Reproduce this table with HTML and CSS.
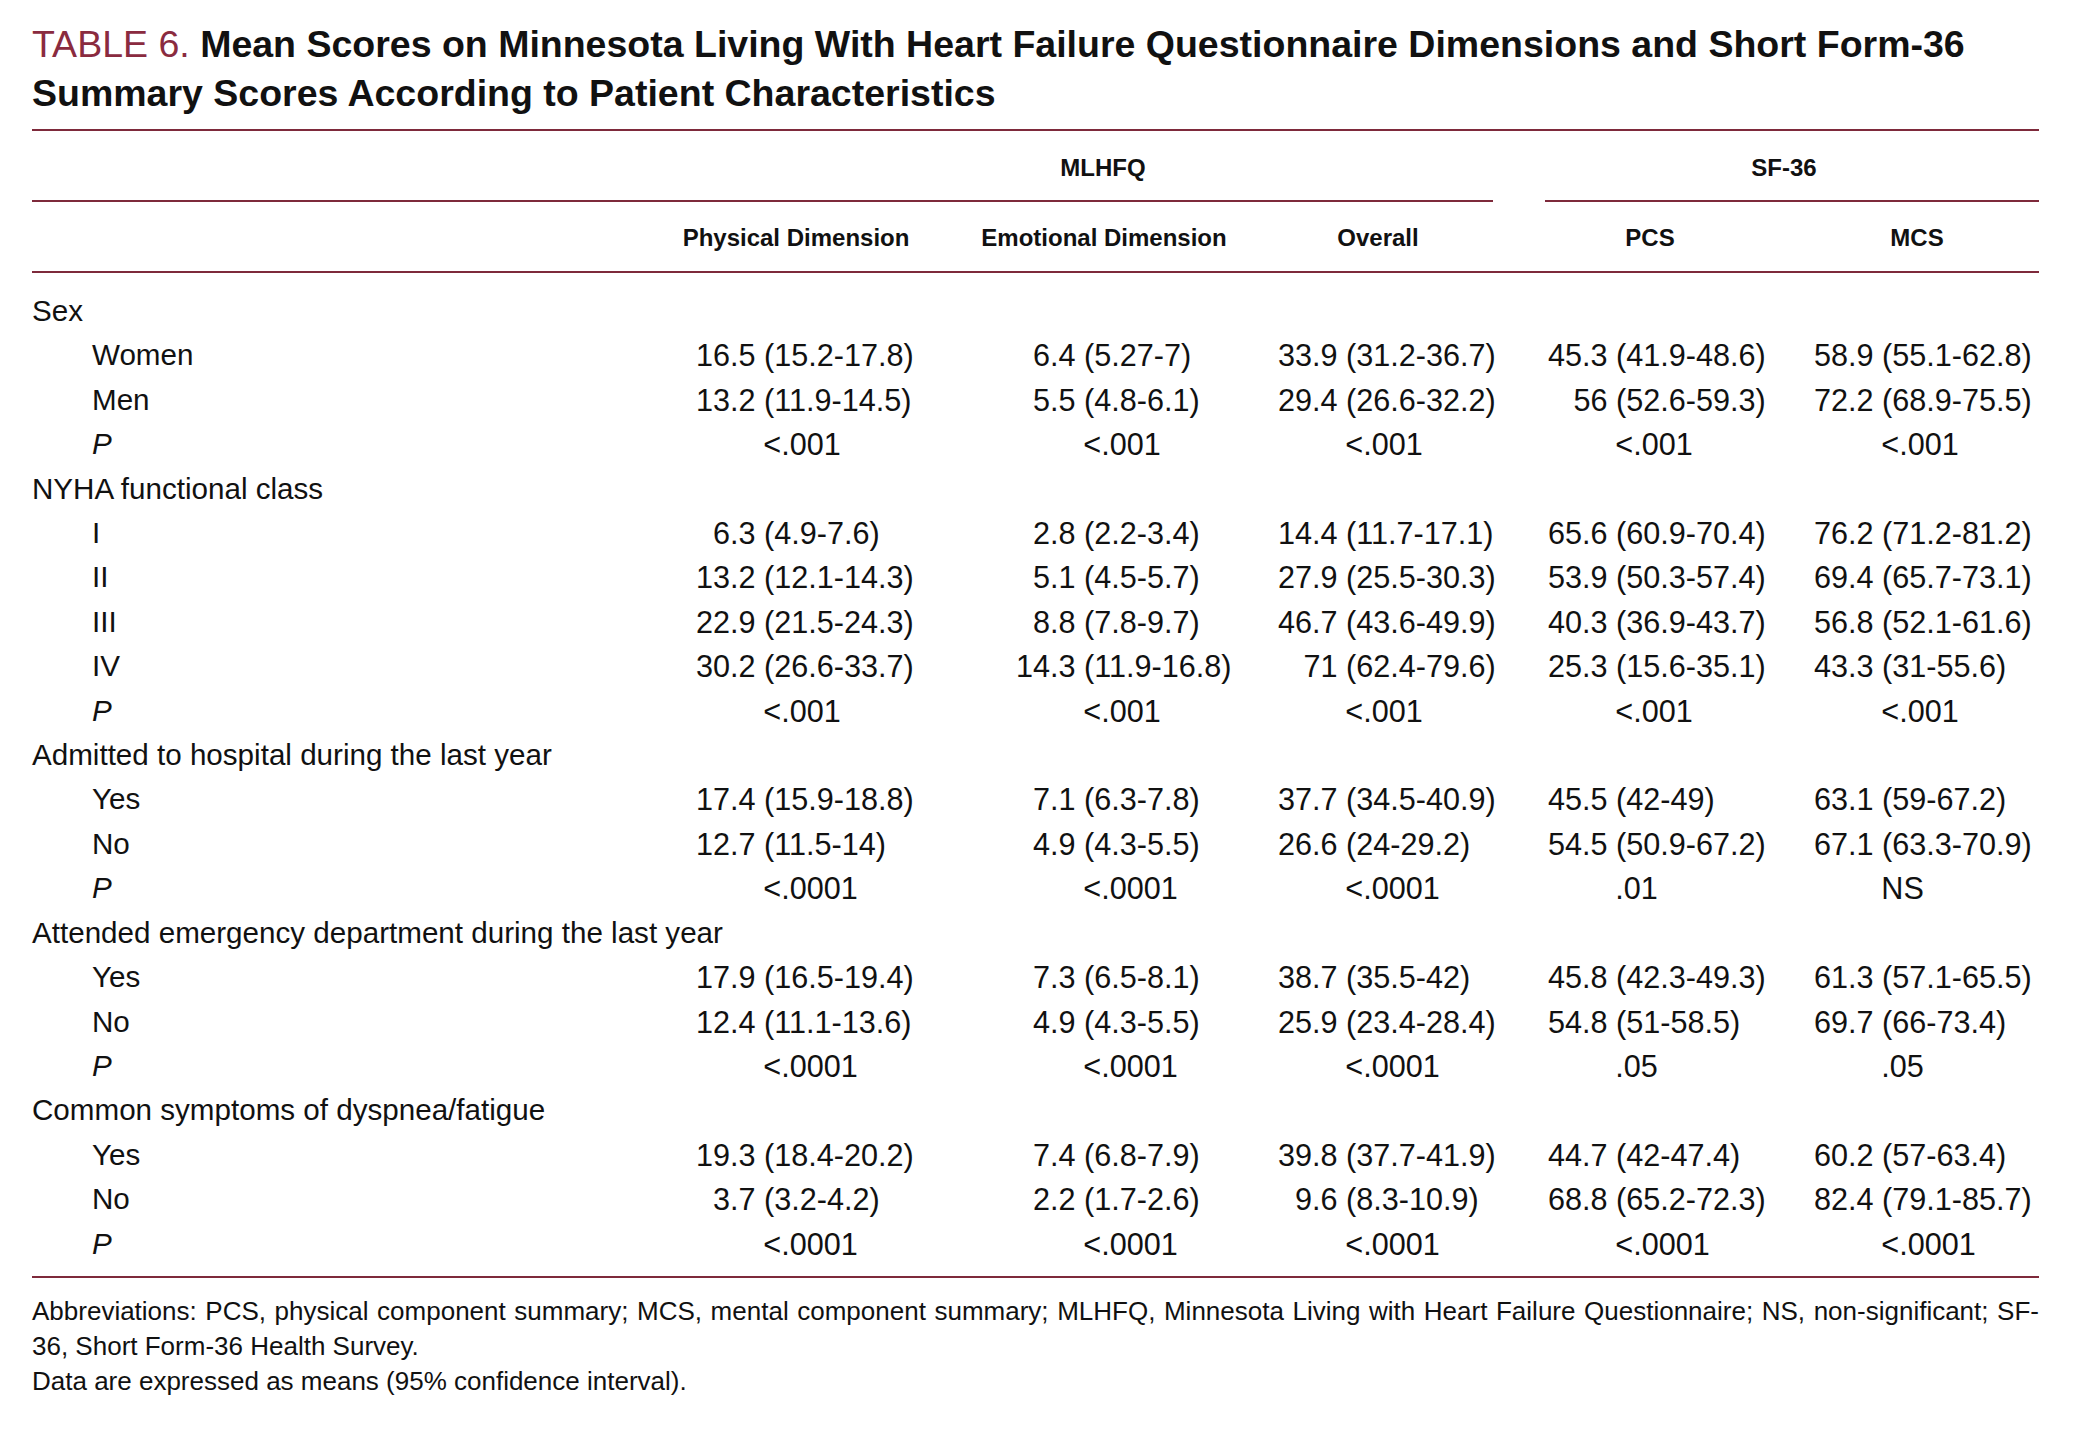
FILE: index.html
```
<!DOCTYPE html>
<html lang="en">
<head>
<meta charset="utf-8">
<title>Table 6</title>
<link rel="stylesheet" href="styles.css">
</head>
<body>
<div class="page">
  <h1 class="title"><span class="tno">TABLE 6.</span> <span class="tt">Mean Scores on Minnesota Living With Heart Failure Questionnaire Dimensions and Short Form-36<br>Summary Scores According to Patient Characteristics</span></h1>
  <div class="rule"></div>

  <div class="grp">
    <div class="grp-spacer"></div>
    <div class="grp-ml">MLHFQ</div>
    <div class="grp-sf">SF-36</div>
  </div>
  <div class="grp-rules"><div class="seg seg-ml"></div><div class="seg seg-sf"></div></div>

  <div class="row colhead">
    <div></div>
    <div class="hc hc1"><span>Physical Dimension</span></div>
    <div class="hc hc2"><span>Emotional Dimension</span></div>
    <div class="hc hc3"><span>Overall</span></div>
    <div class="hc hc4"><span>PCS</span></div>
    <div class="hc hc5"><span>MCS</span></div>
  </div>
  <div class="rule"></div>

  <div class="tbody">
    <div class="row sec"><div class="lab">Sex</div></div>
    <div class="row">
      <div class="lab sub">Women</div>
      <div class="v"><span class="m">16.5</span><span>(15.2-17.8)</span></div>
      <div class="v"><span class="m">6.4</span><span>(5.27-7)</span></div>
      <div class="v"><span class="m">33.9</span><span>(31.2-36.7)</span></div>
      <div class="v"><span class="m">45.3</span><span>(41.9-48.6)</span></div>
      <div class="v"><span class="m">58.9</span><span>(55.1-62.8)</span></div>
    </div>
    <div class="row">
      <div class="lab sub">Men</div>
      <div class="v"><span class="m">13.2</span><span>(11.9-14.5)</span></div>
      <div class="v"><span class="m">5.5</span><span>(4.8-6.1)</span></div>
      <div class="v"><span class="m">29.4</span><span>(26.6-32.2)</span></div>
      <div class="v"><span class="m">56</span><span>(52.6-59.3)</span></div>
      <div class="v"><span class="m">72.2</span><span>(68.9-75.5)</span></div>
    </div>
    <div class="row">
      <div class="lab sub"><i>P</i></div>
      <div class="p">&lt;.001</div><div class="p">&lt;.001</div><div class="p">&lt;.001</div><div class="p">&lt;.001</div><div class="p">&lt;.001</div>
    </div>

    <div class="row sec"><div class="lab">NYHA functional class</div></div>
    <div class="row">
      <div class="lab sub">I</div>
      <div class="v"><span class="m">6.3</span><span>(4.9-7.6)</span></div>
      <div class="v"><span class="m">2.8</span><span>(2.2-3.4)</span></div>
      <div class="v"><span class="m">14.4</span><span>(11.7-17.1)</span></div>
      <div class="v"><span class="m">65.6</span><span>(60.9-70.4)</span></div>
      <div class="v"><span class="m">76.2</span><span>(71.2-81.2)</span></div>
    </div>
    <div class="row">
      <div class="lab sub">II</div>
      <div class="v"><span class="m">13.2</span><span>(12.1-14.3)</span></div>
      <div class="v"><span class="m">5.1</span><span>(4.5-5.7)</span></div>
      <div class="v"><span class="m">27.9</span><span>(25.5-30.3)</span></div>
      <div class="v"><span class="m">53.9</span><span>(50.3-57.4)</span></div>
      <div class="v"><span class="m">69.4</span><span>(65.7-73.1)</span></div>
    </div>
    <div class="row">
      <div class="lab sub">III</div>
      <div class="v"><span class="m">22.9</span><span>(21.5-24.3)</span></div>
      <div class="v"><span class="m">8.8</span><span>(7.8-9.7)</span></div>
      <div class="v"><span class="m">46.7</span><span>(43.6-49.9)</span></div>
      <div class="v"><span class="m">40.3</span><span>(36.9-43.7)</span></div>
      <div class="v"><span class="m">56.8</span><span>(52.1-61.6)</span></div>
    </div>
    <div class="row">
      <div class="lab sub">IV</div>
      <div class="v"><span class="m">30.2</span><span>(26.6-33.7)</span></div>
      <div class="v"><span class="m">14.3</span><span>(11.9-16.8)</span></div>
      <div class="v"><span class="m">71</span><span>(62.4-79.6)</span></div>
      <div class="v"><span class="m">25.3</span><span>(15.6-35.1)</span></div>
      <div class="v"><span class="m">43.3</span><span>(31-55.6)</span></div>
    </div>
    <div class="row">
      <div class="lab sub"><i>P</i></div>
      <div class="p">&lt;.001</div><div class="p">&lt;.001</div><div class="p">&lt;.001</div><div class="p">&lt;.001</div><div class="p">&lt;.001</div>
    </div>

    <div class="row sec"><div class="lab">Admitted to hospital during the last year</div></div>
    <div class="row">
      <div class="lab sub">Yes</div>
      <div class="v"><span class="m">17.4</span><span>(15.9-18.8)</span></div>
      <div class="v"><span class="m">7.1</span><span>(6.3-7.8)</span></div>
      <div class="v"><span class="m">37.7</span><span>(34.5-40.9)</span></div>
      <div class="v"><span class="m">45.5</span><span>(42-49)</span></div>
      <div class="v"><span class="m">63.1</span><span>(59-67.2)</span></div>
    </div>
    <div class="row">
      <div class="lab sub">No</div>
      <div class="v"><span class="m">12.7</span><span>(11.5-14)</span></div>
      <div class="v"><span class="m">4.9</span><span>(4.3-5.5)</span></div>
      <div class="v"><span class="m">26.6</span><span>(24-29.2)</span></div>
      <div class="v"><span class="m">54.5</span><span>(50.9-67.2)</span></div>
      <div class="v"><span class="m">67.1</span><span>(63.3-70.9)</span></div>
    </div>
    <div class="row">
      <div class="lab sub"><i>P</i></div>
      <div class="p">&lt;.0001</div><div class="p">&lt;.0001</div><div class="p">&lt;.0001</div><div class="p">.01</div><div class="p">NS</div>
    </div>

    <div class="row sec"><div class="lab">Attended emergency department during the last year</div></div>
    <div class="row">
      <div class="lab sub">Yes</div>
      <div class="v"><span class="m">17.9</span><span>(16.5-19.4)</span></div>
      <div class="v"><span class="m">7.3</span><span>(6.5-8.1)</span></div>
      <div class="v"><span class="m">38.7</span><span>(35.5-42)</span></div>
      <div class="v"><span class="m">45.8</span><span>(42.3-49.3)</span></div>
      <div class="v"><span class="m">61.3</span><span>(57.1-65.5)</span></div>
    </div>
    <div class="row">
      <div class="lab sub">No</div>
      <div class="v"><span class="m">12.4</span><span>(11.1-13.6)</span></div>
      <div class="v"><span class="m">4.9</span><span>(4.3-5.5)</span></div>
      <div class="v"><span class="m">25.9</span><span>(23.4-28.4)</span></div>
      <div class="v"><span class="m">54.8</span><span>(51-58.5)</span></div>
      <div class="v"><span class="m">69.7</span><span>(66-73.4)</span></div>
    </div>
    <div class="row">
      <div class="lab sub"><i>P</i></div>
      <div class="p">&lt;.0001</div><div class="p">&lt;.0001</div><div class="p">&lt;.0001</div><div class="p">.05</div><div class="p">.05</div>
    </div>

    <div class="row sec"><div class="lab">Common symptoms of dyspnea/fatigue</div></div>
    <div class="row">
      <div class="lab sub">Yes</div>
      <div class="v"><span class="m">19.3</span><span>(18.4-20.2)</span></div>
      <div class="v"><span class="m">7.4</span><span>(6.8-7.9)</span></div>
      <div class="v"><span class="m">39.8</span><span>(37.7-41.9)</span></div>
      <div class="v"><span class="m">44.7</span><span>(42-47.4)</span></div>
      <div class="v"><span class="m">60.2</span><span>(57-63.4)</span></div>
    </div>
    <div class="row">
      <div class="lab sub">No</div>
      <div class="v"><span class="m">3.7</span><span>(3.2-4.2)</span></div>
      <div class="v"><span class="m">2.2</span><span>(1.7-2.6)</span></div>
      <div class="v"><span class="m">9.6</span><span>(8.3-10.9)</span></div>
      <div class="v"><span class="m">68.8</span><span>(65.2-72.3)</span></div>
      <div class="v"><span class="m">82.4</span><span>(79.1-85.7)</span></div>
    </div>
    <div class="row">
      <div class="lab sub"><i>P</i></div>
      <div class="p">&lt;.0001</div><div class="p">&lt;.0001</div><div class="p">&lt;.0001</div><div class="p">&lt;.0001</div><div class="p">&lt;.0001</div>
    </div>
  </div>
  <div class="rule"></div>

  <div class="foot">
    <p class="just">Abbreviations: PCS, physical component summary; MCS, mental component summary; MLHFQ, Minnesota Living with Heart Failure Questionnaire; NS, non-significant; SF-<wbr>36, Short Form-36 Health Survey.</p>
    <p>Data are expressed as means (95% confidence interval).</p>
  </div>
</div>
</body>
</html>
```

FILE: styles.css
```
html, body {
  margin: 0;
  padding: 0;
  background: #ffffff;
}

body {
  font-family: "Liberation Sans", Arial, sans-serif;
  color: #111111;
}

.page {
  width: 2007px;
  margin-left: 32px;
  padding-top: 20px;
}

.title {
  margin: 0;
  font-size: 37.5px;
  line-height: 49px;
  font-weight: normal;
}

.tno {
  color: #8a2b3f;
}

.tt {
  font-weight: bold;
}

.rule {
  height: 2px;
  background: #7e2a3b;
}

.title + .rule {
  margin-top: 11px;
}

.grp {
  display: flex;
  padding: 22px 0 17px;
  font-weight: bold;
  font-size: 24px;
  line-height: 30px;
}

.grp-spacer {
  width: 664px;
}

.grp-ml {
  width: 814px;
  display: flex;
  justify-content: center;
}

.grp-sf {
  margin-left: 38px;
  width: 472px;
  display: flex;
  justify-content: center;
}

.grp-rules {
  display: flex;
  gap: 52px;
}

.seg {
  height: 2px;
  background: #7e2a3b;
}

.seg-ml {
  width: 1461px;
}

.seg-sf {
  flex: 1;
}

.row {
  display: grid;
  grid-template-columns: 664px 320px 262px 270px 266px 225px;
}

.colhead {
  padding: 21px 0 18px;
  font-weight: bold;
  font-size: 24px;
  line-height: 30px;
}

.hc {
  display: flex;
  justify-content: center;
  white-space: nowrap;
}

.hc1 { width: 200px; }
.hc2 { width: 176px; }
.hc3 { width: 200px; }
.hc4 { width: 204px; }
.hc5 { width: 206px; }

.tbody {
  padding: 16px 0 10px;
  font-size: 29.6px;
  line-height: 44.4px;
}

.sec .lab {
  grid-column: 1 / -1;
}

.lab.sub {
  padding-left: 60px;
}

.v,
.p {
  font-size: 30.6px;
  white-space: nowrap;
}

.v .m {
  display: inline-block;
  width: 1.946em;
  margin-right: 0.278em;
  text-align: right;
}

.p {
  padding-left: 2.2em;
}

.foot {
  padding-top: 16px;
  font-size: 26px;
  line-height: 35.2px;
}

.foot p {
  margin: 0;
}

.foot .just {
  text-align: justify;
}
```
